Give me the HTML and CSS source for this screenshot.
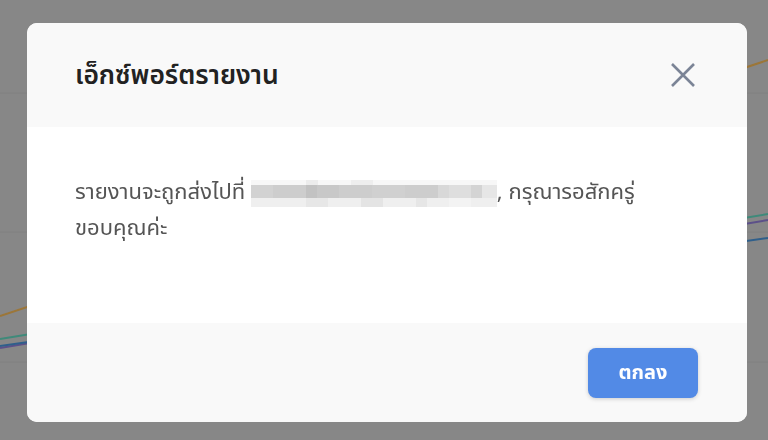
FILE: index.html
```html
<!DOCTYPE html>
<html lang="th">
<head>
<meta charset="utf-8">
<link rel="stylesheet" href="styles.css">
</head>
<body>
<svg class="backdrop-chart" width="768" height="440" viewBox="0 0 768 440">
  <line x1="0" y1="93" x2="768" y2="93" stroke="#808080" stroke-width="1"/>
  <line x1="0" y1="232" x2="768" y2="232" stroke="#808080" stroke-width="1"/>
  <line x1="0" y1="362" x2="768" y2="362" stroke="#808080" stroke-width="1"/>
  <line x1="0" y1="316" x2="768" y2="60" stroke="#9c7638" stroke-width="2"/>
  <line x1="0" y1="339" x2="768" y2="214" stroke="#3f8a7a" stroke-width="2"/>
  <line x1="0" y1="348" x2="768" y2="220" stroke="#5c5089" stroke-width="2"/>
  <line x1="0" y1="346" x2="768" y2="238" stroke="#2f5f8b" stroke-width="2"/>
</svg>
<div class="overlay">
  <div class="modal">
    <div class="modal-header">
      <h2 class="modal-title">เอ็กซ์พอร์ตรายงาน</h2>
      <button class="close-btn" aria-label="close">
        <svg width="26" height="26" viewBox="0 0 26 26"><path d="M2 2 L24 24 M24 2 L2 24" stroke="#7b8496" stroke-width="2.6" fill="none"/></svg>
      </button>
    </div>
    <div class="modal-body">
      <p class="message">รายงานจะถูกส่งไปที่ <svg class="blur" width="246" height="27" viewBox="0 0 246 27" shape-rendering="crispEdges">
        <rect x="0" y="0" width="246" height="27" fill="#f4f4f4"/>
        <rect x="0" y="0" width="246" height="5" fill="#f7f7f7"/>
        <rect x="55" y="0" width="12" height="5" fill="#ececec"/>
        <rect x="100" y="0" width="22" height="5" fill="#eeeeee"/>
        <rect x="0" y="5" width="246" height="13" fill="#cdcdcd"/>
        <rect x="0" y="5" width="22" height="13" fill="#d2d2d2"/>
        <rect x="55" y="5" width="11" height="13" fill="#c2c2c2"/>
        <rect x="66" y="5" width="22" height="13" fill="#c8c8c8"/>
        <rect x="121" y="5" width="33" height="13" fill="#d0d0d0"/>
        <rect x="187" y="5" width="11" height="13" fill="#d8d8d8"/>
        <rect x="198" y="5" width="22" height="13" fill="#dedede"/>
        <rect x="220" y="5" width="11" height="13" fill="#d4d4d4"/>
        <rect x="231" y="5" width="15" height="13" fill="#e6e6e6"/>
        <rect x="0" y="18" width="246" height="9" fill="#efefef"/>
        <rect x="55" y="18" width="22" height="9" fill="#e7e7e7"/>
        <rect x="110" y="18" width="22" height="9" fill="#e4e4e4"/>
        <rect x="165" y="18" width="11" height="9" fill="#e6e6e6"/>
        <rect x="198" y="18" width="22" height="9" fill="#f3f3f3"/>
      </svg>, กรุณารอสักครู่<br>ขอบคุณค่ะ</p>
    </div>
    <div class="modal-footer">
      <button class="ok-btn">ตกลง</button>
    </div>
  </div>
</div>
</body>
</html>
```

FILE: styles.css
```css
html, body {
  margin: 0;
  padding: 0;
  width: 768px;
  height: 440px;
  overflow: hidden;
  background: #878787;
  font-family: "Noto Sans Thai", "Noto Sans Thai UI", "Noto Sans", "Liberation Sans", sans-serif;
  font-stretch: 87.5%;
}
.backdrop-chart {
  position: absolute;
  left: 0;
  top: 0;
}
.overlay {
  position: fixed;
  inset: 0;
  display: flex;
  justify-content: flex-start;
  align-items: flex-start;
  padding: 23px 0 0 27px;
}
.modal {
  width: 720px;
  height: 399px;
  border-radius: 10px;
  overflow: hidden;
  background: #ffffff;
  display: flex;
  flex-direction: column;
}
.modal-header {
  height: 104px;
  background: #f9f9f9;
  display: flex;
  align-items: center;
  justify-content: space-between;
  padding: 0 51px 0 48px;
  box-sizing: border-box;
}
.modal-title {
  margin: 0;
  font-size: 26.4px;
  font-weight: 600;
  color: #222222;
  padding-top: 2px;
}
.close-btn {
  background: none;
  border: 0;
  padding: 0;
  width: 26px;
  height: 26px;
  display: flex;
}
.modal-body {
  height: 196px;
  box-sizing: border-box;
  padding: 48px 48px 0;
}
.message {
  margin: 0;
  font-size: 22px;
  line-height: 36px;
  color: #555555;
}
.blur {
  vertical-align: -8px;
}
.modal-footer {
  flex: 1;
  background: #f9f9f9;
  display: flex;
  justify-content: flex-end;
  align-items: flex-start;
  padding: 25px 49px 0 0;
}
.ok-btn {
  width: 110px;
  height: 50px;
  border: 0;
  border-radius: 8px;
  background: #528ae6;
  color: #ffffff;
  font-family: inherit;
  font-stretch: inherit;
  font-size: 20px;
  font-weight: 700;
  padding: 0;
  box-shadow: 0 1px 4px rgba(0, 0, 0, 0.18);
}
```
